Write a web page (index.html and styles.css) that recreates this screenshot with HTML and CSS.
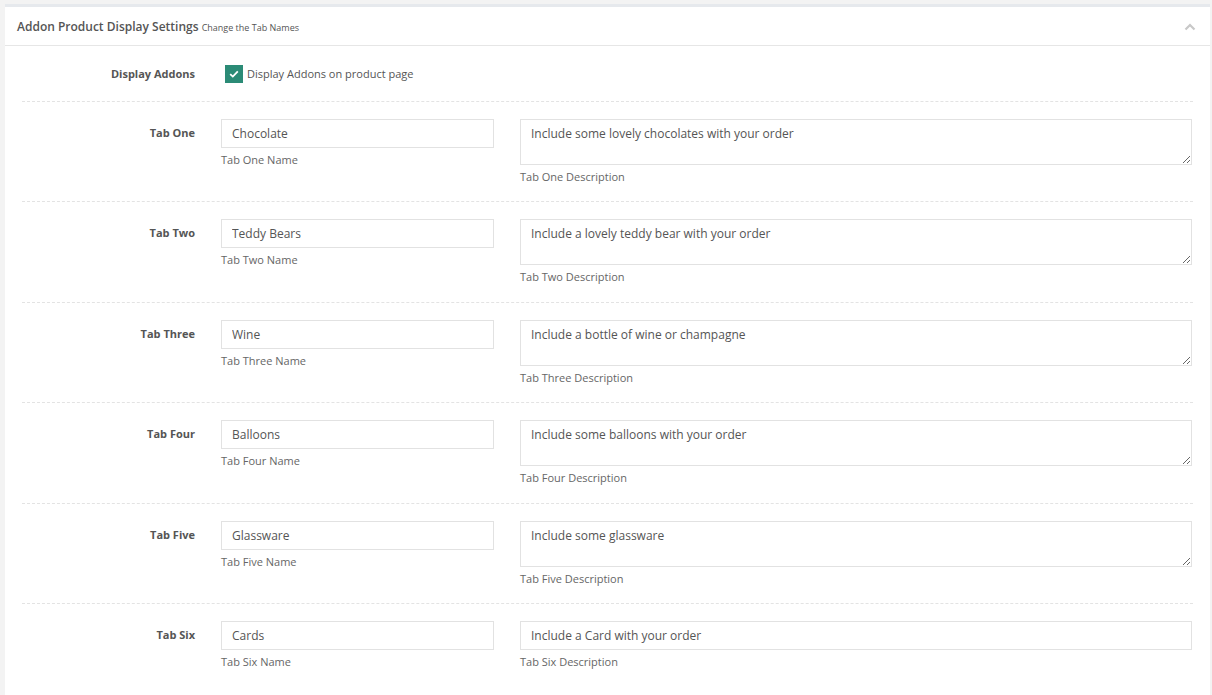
FILE: index.html
```html
<!DOCTYPE html>
<html>
<head>
<meta charset="utf-8">
<link rel="stylesheet" href="styles.css">
</head>
<body>
<div class="panel">
  <div class="panel-head">
    <h3 class="title">Addon Product Display Settings <small>Change the Tab Names</small></h3>
    <svg class="chev" width="12" height="8" viewBox="0 0 12 8"><path d="M1.5 6.5 L6 2 L10.5 6.5" fill="none" stroke="#c8c8c8" stroke-width="2.2"/></svg>
  </div>
  <div class="panel-body">
    <div class="row row-check">
      <div class="label">Display Addons</div>
      <label class="check">
        <span class="box"><svg width="10" height="8" viewBox="0 0 10 8"><path d="M1.2 4.2 L3.8 6.6 L8.8 1.4" fill="none" stroke="#fff" stroke-width="1.8"/></svg></span>
        Display Addons on product page
      </label>
    </div>

    <div class="row">
      <div class="label lbl-tab">Tab One</div>
      <div class="field"><input class="inp" type="text" value="Chocolate"><div class="help">Tab One Name</div></div>
      <div class="field"><textarea class="ta">Include some lovely chocolates with your order</textarea><div class="help">Tab One Description</div></div>
    </div>
    <div class="row">
      <div class="label lbl-tab">Tab Two</div>
      <div class="field"><input class="inp" type="text" value="Teddy Bears"><div class="help">Tab Two Name</div></div>
      <div class="field"><textarea class="ta">Include a lovely teddy bear with your order</textarea><div class="help">Tab Two Description</div></div>
    </div>
    <div class="row">
      <div class="label lbl-tab">Tab Three</div>
      <div class="field"><input class="inp" type="text" value="Wine"><div class="help">Tab Three Name</div></div>
      <div class="field"><textarea class="ta">Include a bottle of wine or champagne</textarea><div class="help">Tab Three Description</div></div>
    </div>
    <div class="row">
      <div class="label lbl-tab">Tab Four</div>
      <div class="field"><input class="inp" type="text" value="Balloons"><div class="help">Tab Four Name</div></div>
      <div class="field"><textarea class="ta">Include some balloons with your order</textarea><div class="help">Tab Four Description</div></div>
    </div>
    <div class="row">
      <div class="label lbl-tab">Tab Five</div>
      <div class="field"><input class="inp" type="text" value="Glassware"><div class="help">Tab Five Name</div></div>
      <div class="field"><textarea class="ta">Include some glassware</textarea><div class="help">Tab Five Description</div></div>
    </div>
    <div class="row row-last">
      <div class="label lbl-tab">Tab Six</div>
      <div class="field"><input class="inp" type="text" value="Cards"><div class="help">Tab Six Name</div></div>
      <div class="field"><input class="inp" type="text" value="Include a Card with your order"><div class="help">Tab Six Description</div></div>
    </div>
  </div>
</div>
</body>
</html>
```

FILE: styles.css
```css
html, body {
  margin: 0;
  padding: 0;
  background: #f3f3f3;
  font-family: "Open Sans", "Noto Sans", sans-serif;
  color: #555;
}
body {
  padding: 4px 2px 0 5px;
  height: 695px;
  box-sizing: border-box;
  overflow: hidden;
}
.panel {
  background: #fff;
  border-top: 3px solid #e6e9ed;
  height: 700px;
}
.panel-head {
  height: 38px;
  border-bottom: 1px solid #e6e6e6;
  display: flex;
  align-items: center;
  justify-content: space-between;
  padding: 0 14px 0 12px;
}
.title {
  margin: 0;
  font-size: 12px;
  font-weight: 600;
  color: #555;
}
.title small {
  font-size: 9px;
  font-weight: 400;
  color: #555;
}
.chev {
  margin-top: 1px;
}
.panel-body {
  padding: 0 17px;
}
.row {
  display: grid;
  grid-template-columns: 183px 273px 1fr;
  border-bottom: 1px dashed #e3e3e3;
  padding: 17px 1px 0 0;
  box-sizing: border-box;
  height: 100.4px;
}
.row > .field:nth-child(2) {
  margin-left: 16px;
  margin-right: -16px;
}
.row > .field:nth-child(3) {
  margin-left: 42px;
}
.row-check {
  display: flex;
  align-items: center;
  padding: 0;
  height: 56px;
}
.row-check .label {
  width: 183px;
}
.row-last {
  border-bottom: none;
}
.label {
  text-align: right;
  padding-right: 10px;
  box-sizing: border-box;
  font-size: 11px;
  font-weight: 700;
  color: #555;
}
.lbl-tab {
  padding-top: 6px;
  line-height: 15px;
}
.check {
  display: flex;
  align-items: center;
  margin-left: 20px;
  font-size: 11px;
  color: #555;
  gap: 4px;
}
.box {
  width: 18px;
  height: 18px;
  background: #2b8b76;
  display: flex;
  align-items: center;
  justify-content: center;
}
.field {
  min-width: 0;
}
.inp, .ta {
  display: block;
  width: 100%;
  box-sizing: border-box;
  border: 1px solid #e2e2e2;
  border-radius: 0;
  font-family: "Open Sans", "Noto Sans", sans-serif;
  font-size: 12px;
  color: #555;
  padding: 0 10px;
  margin: 0;
  background: #fff;
  outline: none;
}
.inp {
  height: 29px;
}
.ta {
  height: 46px;
  padding-top: 6px;
  line-height: 16px;
  resize: vertical;
}
.help {
  font-size: 11px;
  color: #666;
  margin-top: 4px;
  line-height: 15px;
}
```
